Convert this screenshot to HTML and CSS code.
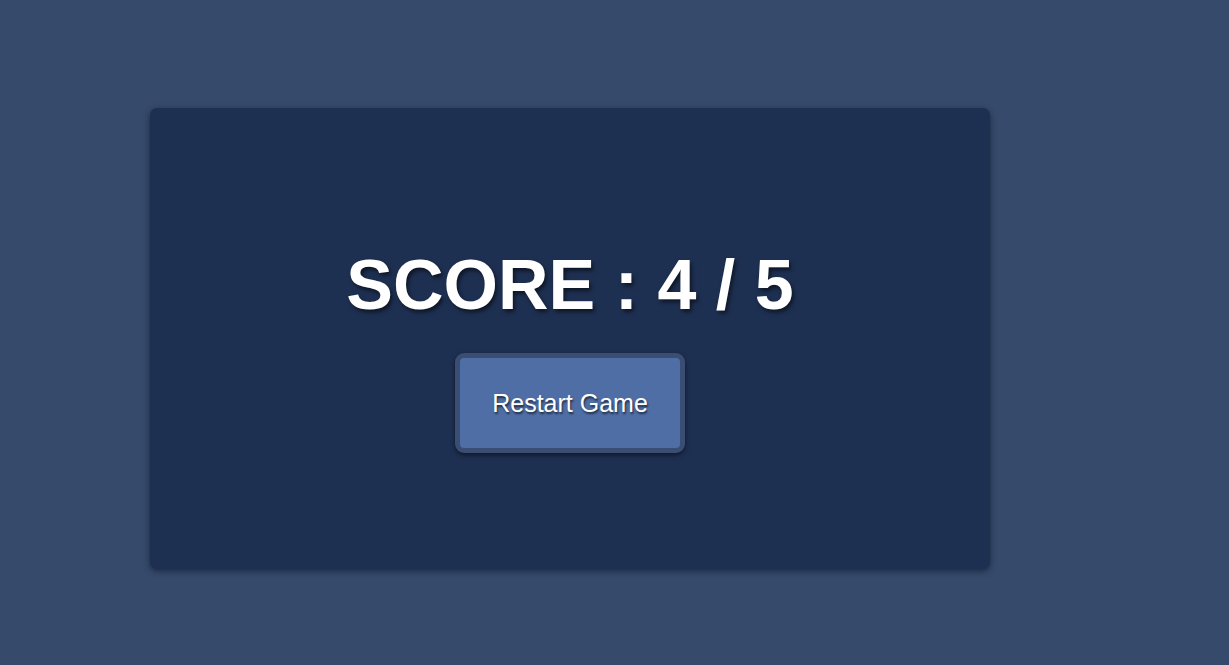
FILE: index.html
```html
<!DOCTYPE html>
<html lang="en">
<head>
<meta charset="utf-8">
<title>Quiz Result</title>
<link rel="stylesheet" href="styles.css">
</head>
<body>
<main class="page">
  <section class="card">
    <h1 class="score">SCORE : 4 / 5</h1>
    <button class="restart" type="button">Restart Game</button>
  </section>
</main>
</body>
</html>
```

FILE: styles.css
```css
html, body {
  margin: 0;
  padding: 0;
  height: 100%;
}
body {
  background: #364a6b;
  font-family: "Liberation Sans", Arial, sans-serif;
}
.page {
  padding: 108px 0 0 150px;
}
.card {
  width: 840px;
  height: 461px;
  box-sizing: border-box;
  padding-top: 22px;
  background: #1e3052;
  border-radius: 7px;
  box-shadow: 0 2px 6px rgba(10, 18, 35, 0.6);
  display: flex;
  flex-direction: column;
  align-items: center;
  justify-content: center;
  gap: 29px;
}
.score {
  margin: 0;
  color: #ffffff;
  font-size: 70px;
  font-weight: bold;
  line-height: 78px;
  text-shadow: 2px 3px 4px rgba(0, 0, 0, 0.55);
}
.restart {
  width: 230px;
  height: 100px;
  box-sizing: border-box;
  border: 5px solid #3a4d72;
  border-radius: 9px;
  background: #4f6ea5;
  color: #ffffff;
  font-family: "Liberation Sans", Arial, sans-serif;
  font-size: 25px;
  text-shadow: 1px 2px 2px rgba(0, 0, 0, 0.6);
  box-shadow: 0 2px 5px rgba(0, 0, 0, 0.55);
  cursor: pointer;
}
```
